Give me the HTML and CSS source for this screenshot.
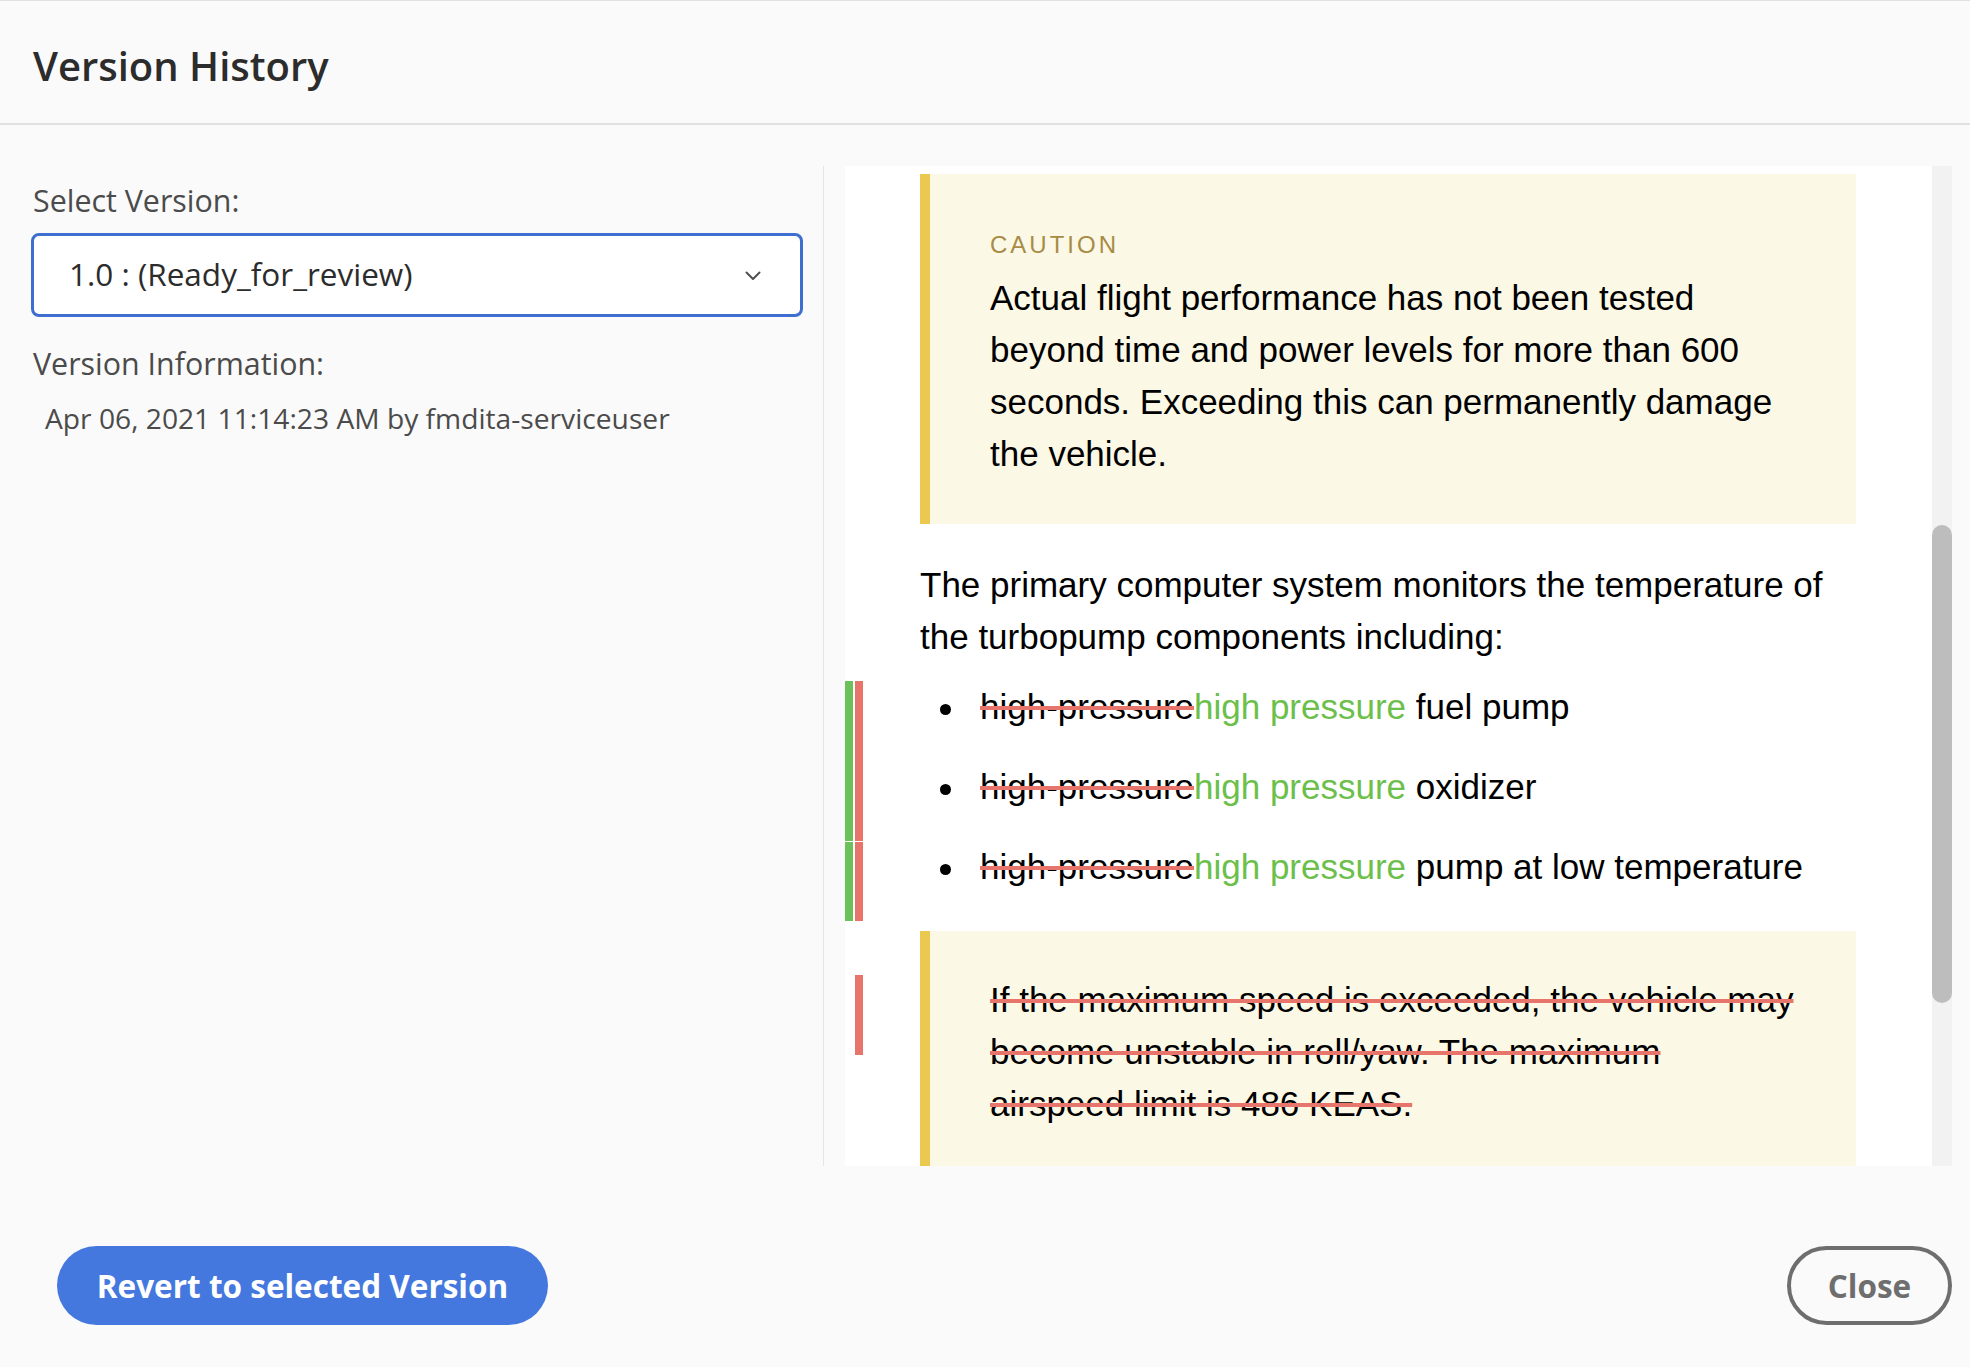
FILE: index.html
```html
<!DOCTYPE html>
<html lang="en">
<head>
<meta charset="utf-8">
<title>Version History</title>
<link rel="stylesheet" href="styles.css">
</head>
<body>
<div class="dialog">
  <header class="header">
    <h1 class="title">Version History</h1>
  </header>
  <div class="main">
    <aside class="sidebar">
      <div class="field-label">Select Version:</div>
      <div class="select">
        <span class="select-value">1.0 : (Ready_for_review)</span>
        <svg class="chevron" width="16" height="10" viewBox="0 0 16 10"><path d="M1.5 1.5 L8 8 L14.5 1.5" fill="none" stroke="#505050" stroke-width="2" stroke-linecap="round" stroke-linejoin="round"/></svg>
      </div>
      <div class="field-label info-label">Version Information:</div>
      <div class="info">Apr 06, 2021 11:14:23 AM by fmdita-serviceuser</div>
    </aside>
    <section class="preview">
      <div class="viewport">
        <div class="doc">
          <div class="note">
            <div class="note-title">CAUTION</div>
            <p>Actual flight performance has not been tested beyond time and power levels for more than 600 seconds. Exceeding this can permanently damage the vehicle.</p>
          </div>
          <p class="para">The primary computer system monitors the temperature of the turbopump components including:</p>
          <ul class="list">
            <li class="item"><span class="bar bar-add"></span><span class="bar bar-del"></span><span class="bullet"><span class="dot"></span></span><span class="text"><del class="del">high-pressure</del><ins class="ins">high pressure</ins> fuel pump</span></li>
            <li class="item"><span class="bar bar-add"></span><span class="bar bar-del"></span><span class="bullet"><span class="dot"></span></span><span class="text"><del class="del">high-pressure</del><ins class="ins">high pressure</ins> oxidizer</span></li>
            <li class="item split"><span class="bar bar-add"></span><span class="bar bar-del"></span><span class="bullet"><span class="dot"></span></span><span class="text"><del class="del">high-pressure</del><ins class="ins">high pressure</ins> pump at low temperature</span></li>
          </ul>
          <div class="note removed">
            <span class="bar note-bar"></span>
            <p><del class="del">If the maximum speed is exceeded, the vehicle may become unstable in roll/yaw. The maximum airspeed limit is 486 KEAS.</del></p>
          </div>
        </div>
      </div>
      <div class="scroll-track"><div class="scroll-thumb"></div></div>
    </section>
  </div>
  <footer class="footer">
    <button class="btn btn-primary">Revert to selected Version</button>
    <button class="btn btn-secondary">Close</button>
  </footer>
</div>
</body>
</html>
```

FILE: styles.css
```css
* { box-sizing: border-box; }
html, body { margin: 0; padding: 0; }
body {
  background: #fafafa;
  font-family: "Open Sans", "Noto Sans", sans-serif;
  width: 1970px;
  height: 1367px;
  overflow: hidden;
}
.dialog {
  display: flex;
  flex-direction: column;
  height: 1367px;
}
.header {
  border-top: 1px solid #e1e1e1;
  border-bottom: 2px solid #e1e1e1;
  padding: 38px 33px 30px;
}
.title {
  margin: 0;
  font-size: 40px;
  font-weight: 600;
  line-height: 54px;
  color: #2c2c2c;
}
.main {
  display: flex;
  padding-top: 41px;
  height: 1041px;
  flex: none;
}
.sidebar {
  width: 824px;
  flex: none;
  height: 1000px;
  border-right: 1px solid #e6e6e6;
  padding: 14px 20px 0 31px;
}
.field-label {
  font-size: 30.4px;
  line-height: 41px;
  color: #4b4b4b;
  padding-left: 2px;
}
.select {
  margin-top: 12px;
  height: 84px;
  border: 3px solid #3e6fd0;
  border-radius: 8px;
  background: #fff;
  display: flex;
  align-items: center;
  justify-content: space-between;
  padding: 0 39px 4px 35px;
}
.select-value {
  font-size: 31.5px;
  line-height: 41px;
  color: #2c2c2c;
}
.chevron { margin-top: 6px; }
.info-label { margin-top: 26px; }
.info {
  margin-top: 14px;
  padding-left: 14px;
  font-size: 28.2px;
  line-height: 41px;
  color: #4b4b4b;
}
.preview {
  display: flex;
  margin-left: 21px;
  height: 1000px;
}
.viewport {
  width: 1087px;
  height: 1000px;
  background: #fff;
  overflow: hidden;
  padding: 8px 76px 0 75px;
}
.scroll-track {
  width: 20px;
  height: 1000px;
  background: #f2f2f2;
  padding-top: 359px;
}
.scroll-thumb {
  height: 478px;
  background: #bdbdbd;
  border-radius: 10px;
}
.doc {
  font-family: "Liberation Sans", Arial, sans-serif;
  font-size: 35px;
  line-height: 52px;
  color: #000;
}
.doc p { margin: 0; }
.note {
  position: relative;
  background: #fcf8e6;
  border-left: 10px solid #ebc850;
  padding: 43px 60px 44px;
}
.note-title {
  font-size: 24px;
  line-height: 55px;
  letter-spacing: 3px;
  color: #a78c45;
}
.doc .para { margin: 35px 0 18px; }
.list {
  list-style: none;
  margin: 0;
  padding: 0;
}
.item {
  position: relative;
  display: flex;
  height: 80px;
}
.bullet {
  flex: none;
  width: 60px;
}
.dot {
  display: block;
  width: 11px;
  height: 11px;
  border-radius: 50%;
  background: #000;
  margin: 23px 0 0 20px;
}
.bar {
  position: absolute;
  top: 0;
  width: 8px;
  height: 80px;
}
.bar-add { left: -75px; background: #6cc15a; }
.bar-del { left: -65px; background: #e8756b; }
.item.split .bar { top: 1px; height: 79px; }
.del {
  text-decoration: line-through;
  text-decoration-color: #e8756b;
  text-decoration-thickness: 4px;
}
.ins {
  text-decoration: none;
  color: #6cbf4b;
}
.note.removed { margin-top: 10px; }
.note-bar {
  left: -75px;
  top: 44px;
  background: #e8756b;
}
.footer {
  flex: 1;
  display: flex;
  justify-content: space-between;
  align-items: flex-start;
  padding: 80px 18px 0 57px;
}
.btn {
  height: 79px;
  border-radius: 40px;
  font-family: "Open Sans", "Noto Sans", sans-serif;
  font-weight: 700;
  font-size: 31.5px;
  cursor: pointer;
  padding: 0;
}
.btn-primary {
  width: 491px;
  background: #4478df;
  color: #fff;
  border: none;
}
.btn-secondary {
  width: 165px;
  background: transparent;
  border: 4px solid #6e6e6e;
  color: #6e6e6e;
}
```
